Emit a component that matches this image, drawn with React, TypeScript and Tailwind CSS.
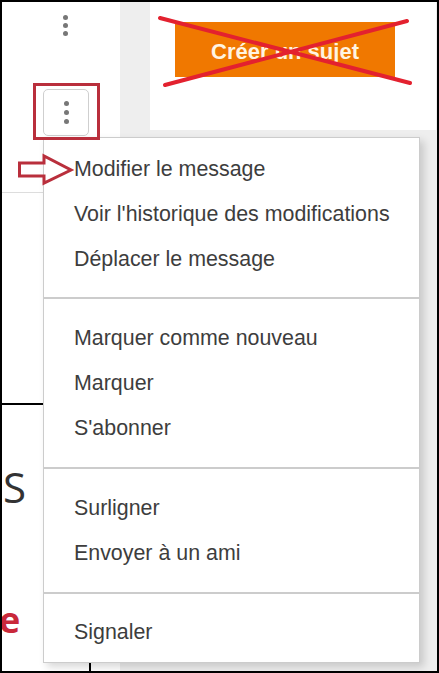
import React from "react";

const Dot = () => <div className="w-[5px] h-[5px] rounded-full bg-[#777777]" />;

export default function App() {
  const sections: { items: string[]; pt: string; pb: string }[] = [
    { items: ["Modifier le message", "Voir l'historique des modifications", "Déplacer le message"], pt: "pt-[9px]", pb: "pb-[15px]" },
    { items: ["Marquer comme nouveau", "Marquer", "S'abonner"], pt: "pt-[17px]", pb: "pb-[16px]" },
    { items: ["Surligner", "Envoyer à un ami"], pt: "pt-[17px]", pb: "pb-[16px]" },
    { items: ["Signaler"], pt: "pt-[16px]", pb: "pb-0" },
  ];
  return (
    <div
      className="relative w-[439px] h-[673px] border-2 border-black bg-[#eeeeee] flex overflow-hidden"
      style={{ fontFamily: '"Liberation Sans", Arial, sans-serif' }}
    >
      {/* left column */}
      <div className="w-[118px] shrink-0 bg-white flex flex-col">
        <div className="ml-[61px] mt-[13px] flex flex-col gap-[3px]">
          <Dot />
          <Dot />
          <Dot />
        </div>
        <div className="ml-[41px] mt-[53px] w-[46px] h-[47px] border border-[#cfcfcf] rounded-[5px] bg-white flex flex-col items-center justify-center gap-[4px]">
          <Dot />
          <Dot />
          <Dot />
        </div>
        <div className="mt-[56px] h-px w-[41px] bg-[#dddddd]" />
        <div className="mt-[210px] h-[2px] w-[41px] bg-black" />
        <div
          className="mt-[60px] ml-[1px] text-[42px] leading-[44px] text-[#333333]"
          style={{ fontFamily: '"Open Sans", sans-serif' }}
        >
          S
        </div>
        <div
          className="mt-[92px] -ml-[3px] text-[36px] leading-[38px] font-bold text-[#c9283a]"
          style={{ fontFamily: '"Open Sans", sans-serif' }}
        >
          e
        </div>
        <div className="mt-auto ml-[87px] w-[2px] h-[8px] bg-black" />
      </div>

      {/* right area */}
      <div className="flex-1 pl-[30px]">
        <div className="w-[286px] h-[128px] bg-white pt-[20px] pl-[25px]">
          <div className="w-[220px] h-[55px] bg-[#f07800] flex items-center justify-center pt-[3px] text-[22px] font-bold text-[#fff4e2]">
            Créer un sujet
          </div>
        </div>
      </div>

      {/* dropdown menu */}
      <div className="absolute left-[41px] top-[135px] w-[377px] h-[526px] bg-white border border-[#cccccc] shadow-[4px_4px_8px_rgba(0,0,0,0.16)] flex flex-col">
        {sections.map((s, i) => (
          <React.Fragment key={i}>
            {i > 0 && <div className="h-[2px] bg-[#cccccc]" />}
            <div className={`${s.pt} ${s.pb}`}>
              {s.items.map((t) => (
                <div key={t} className="h-[45px] flex items-center pl-[30px] text-[21.4px] text-[#3d3d3d]">
                  {t}
                </div>
              ))}
            </div>
          </React.Fragment>
        ))}
      </div>

      {/* annotations */}
      <svg
        className="absolute -left-[2px] -top-[2px] pointer-events-none"
        width="439"
        height="673"
        viewBox="0 0 439 673"
      >
        <line x1="160" y1="18" x2="410" y2="83" stroke="#e3212f" strokeWidth="4" strokeLinecap="round" />
        <line x1="165" y1="85" x2="407" y2="21" stroke="#e3212f" strokeWidth="4" strokeLinecap="round" />
        <rect x="34.5" y="84.5" width="64" height="54" fill="none" stroke="#b92f3c" strokeWidth="3" />
        <polygon
          points="19.5,163 44,163 44,156 71,170 44,183 44,176 19.5,176"
          fill="none"
          stroke="#b92f3c"
          strokeWidth="3"
          strokeLinejoin="miter"
        />
      </svg>
    </div>
  );
}
